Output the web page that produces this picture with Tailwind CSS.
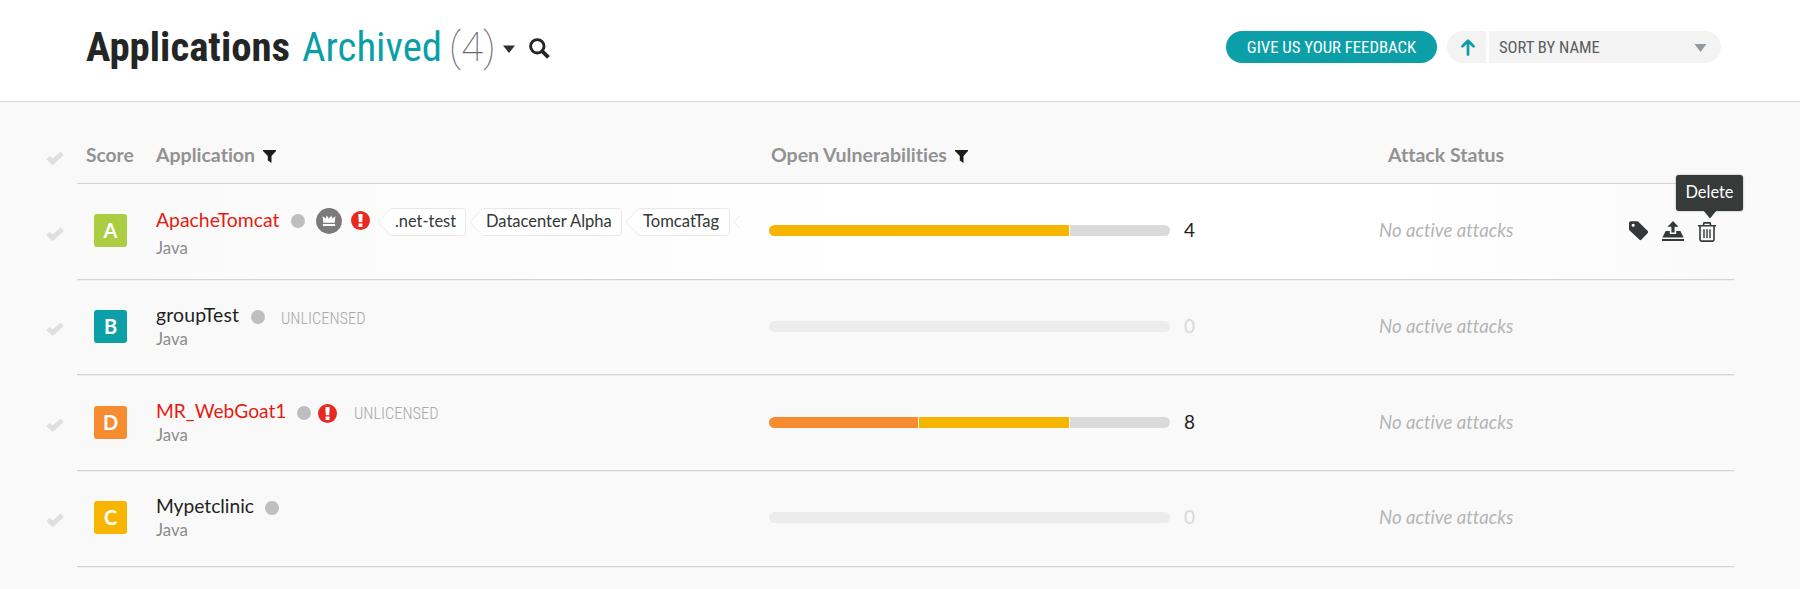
<!DOCTYPE html>
<html lang="en">
<head>
<meta charset="utf-8">
<title>Applications</title>
<script src="https://cdn.jsdelivr.net/npm/@tailwindcss/browser@4"></script>
</head>
<body class="w-[1800px] h-[589px] overflow-hidden bg-[#f9f9f9] font-[Lato,sans-serif] text-[#1d1f1f] [font-variant-ligatures:none]">
<svg class="hidden">
  <symbol id="check" viewBox="0 0 18 14"><path d="M1.900 6.600l4.700 4.300L16.200 2.300" fill="none" stroke="#dfdfdf" stroke-width="4.800"/></symbol>
  <symbol id="funnel" viewBox="0 0 13 13"><path d="M0 0h13v1L8.500 6v7L4.800 10.400V6L0 1z" fill="#1b1d1d"/></symbol>
  <symbol id="alert" viewBox="0 0 19 19"><circle cx="9.5" cy="9.5" r="9.5" fill="#e62a22"/><path d="M7.300 2.900h4.400l-.5 8.400H7.800zM7.600 12.600h3.800V16H7.600z" fill="#fff"/></symbol>
</svg>

<header class="h-[102px] bg-white border-b border-[#d6d6d6] flex items-start">
  <h1 class="flex ml-[86px] mt-[23px] h-12 leading-[48px] text-[40.8px] font-['Roboto_Condensed',Roboto,sans-serif] whitespace-nowrap">
    <span class="font-bold text-[#242626] w-[216px]">Applications</span>
    <span class="font-normal text-[#0a9fa8] w-[147px]">Archived</span>
    <span class="font-thin font-[Roboto,sans-serif] text-[40.6px] text-[#6a6a6a] w-[54px]">(4)</span>
  </h1>
  <svg class="mt-[45px] w-[12px] h-[8px]" viewBox="0 0 12 8"><path d="M0 .5h12L6 8z" fill="#2d302f"/></svg>
  <svg class="ml-[14px] mt-[38px] w-[21px] h-[21px]" viewBox="0 0 21 21" fill="none" stroke="#232626"><circle cx="8.3" cy="8.3" r="6.7" stroke-width="2.9"/><path d="M13.4 13.4l6 6" stroke-width="3.8"/></svg>
  <button class="ml-[676px] mt-[31px] w-[211px] h-8 rounded-full bg-[#0d9fa8] text-white text-[16.7px] leading-[31px] font-['Roboto_Condensed',sans-serif] text-center">GIVE US YOUR FEEDBACK</button>
  <div class="ml-[10px] mt-[31px] h-8 flex gap-[3px] font-['Roboto_Condensed',sans-serif] text-[16.600px] text-[#5a5c5c]">
    <div class="w-[39px] bg-[#f3f3f3] rounded-l-full"><svg class="ml-[14px] mt-[8px] w-[14px] h-[17px]" viewBox="0 0 14 17" fill="none" stroke="#0a9fa8" stroke-width="2.7" stroke-linecap="round" stroke-linejoin="round"><path d="M7 15.6V2M1.5 7.2L7 1.7l5.5 5.5"/></svg></div>
    <div class="w-[232px] bg-[#f3f3f3] rounded-r-full flex justify-between pl-[10px] pr-[14px] leading-[33px]"><span>SORT BY NAME</span><svg class="mt-[13px] w-[13px] h-[8px]" viewBox="0 0 13 8"><path d="M.5 0h12L6.5 8z" fill="#919a9e"/></svg></div>
  </div>
</header>

<main>
  <div class="h-[82px] relative flex items-start text-[19.5px] leading-6 font-bold text-[#929292] pt-[41px]">
    <svg class="ml-[46px] mt-[8px] w-[18px] h-[14px]"><use href="#check"/></svg>
    <div class="ml-[22px] w-[70px] text-[19.200px]">Score</div>
    <div class="w-[615px] flex gap-[8px]"><span>Application</span><svg class="mt-[7px] w-[13px] h-[13px]"><use href="#funnel"/></svg></div>
    <div class="w-[617px] flex gap-[8px]"><span>Open Vulnerabilities</span><svg class="mt-[7px] w-[13px] h-[13px]"><use href="#funnel"/></svg></div>
    <div>Attack Status</div>
    <div class="absolute left-[77px] right-[66px] bottom-0 h-px bg-[#d4d4d4] shadow-[0_1px_0_#ececec]"></div>
  </div>

  <section class="h-24 relative flex items-start bg-[linear-gradient(90deg,#f9f9f9_0%,#fff_50%,#fff_78%,#f9f9f9_98%)]">
    <svg class="ml-[46px] mt-[43px] w-[18px] h-[14px]"><use href="#check"/></svg>
    <div class="ml-[30px] mt-[30px] w-[33px] h-[33px] rounded-[3px] bg-[#aacd42] text-white font-bold text-[20px] leading-[33px] text-center">A</div>
    <div class="ml-[29px] w-[613px]">
      <div class="flex items-start h-[54px] pt-[24px]">
        <span class="text-[19.4px] leading-6 w-[135px] text-[#e51b12]">ApacheTomcat</span>
        <span class="w-[14px] h-[14px] mt-[6px] rounded-full bg-[#bebebe]"></span>
        <svg class="ml-[11px] w-[26px] h-[26px]" viewBox="0 0 26 26"><circle cx="13" cy="13" r="12.9" fill="#7b7b7b"/><path d="M7.3 14.8L6.6 8.3l3.1 2.3.9-3 2.4 2.8L15.4 7.600l.9 3 3.100-2.300-.7 6.500zM6.900 15.900h12.200v2H6.900z" fill="#fff"/></svg>
        <svg class="ml-[9px] mt-[3px] w-[19px] h-[19px]"><use href="#alert"/></svg>
        <div class="flex ml-[7px] gap-[3px] text-[16.4px] leading-[26px] text-[#333736]">
          <div class="relative w-[89px] h-7 pl-[18px]"><svg class="absolute inset-0 w-full h-full" viewBox="0 0 89 28"><path d="M14 .5h71q3.500 0 3.500 3.500v20q0 3.500-3.500 3.500H14L.7 14z" fill="#fff" stroke="#e8e8e8"/></svg><span class="relative">.net-test</span></div>
          <div class="relative w-[153px] h-7 pl-[17px]"><svg class="absolute inset-0 w-full h-full" viewBox="0 0 153 28"><path d="M14 .5h135q3.500 0 3.500 3.500v20q0 3.500-3.500 3.500H14L.7 14z" fill="#fff" stroke="#e8e8e8"/></svg><span class="relative whitespace-nowrap text-[16.500px]">Datacenter Alpha</span></div>
          <div class="relative w-[105px] h-7 pl-[18px]"><svg class="absolute inset-0 w-full h-full" viewBox="0 0 105 28"><path d="M14 .5h87q3.500 0 3.500 3.500v20q0 3.500-3.500 3.500H14L.7 14z" fill="#fff" stroke="#e8e8e8"/></svg><span class="relative text-[16.600px]">TomcatTag</span></div>
          <svg class="w-[7px] h-7" viewBox="0 0 7 28"><path d="M6.500 8L.7 14l5.800 6" fill="none" stroke="#e8e8e8"/></svg>
        </div>
      </div>
      <div class="text-[16.8px] leading-5 text-[#8c8c8c]">Java</div>
    </div>
    <div class="mt-[41px] w-[401px] h-[11px] flex gap-px rounded-full overflow-hidden"><div class="w-[300px] bg-[#f7b500]"></div><div class="flex-1 bg-[#dadada]"></div></div>
    <div class="ml-[14px] mt-[34px] w-[195px] text-[19px] leading-6">4</div>
    <div class="mt-[34px] w-[250px] text-[18.6px] leading-6 italic text-[#b5b5b5]">No active attacks</div>
    <svg class="mt-[37px] w-[20px] h-[20px]" viewBox="0 0 20 20"><path d="M0 2Q0 .3 1.800.300H8.200Q9 .3 9.600.900L18.800 10Q19.700 11 18.800 12L12.300 18.800Q11.400 19.500 10.500 18.800L.7 9.600Q0 9 0 8.200zM4.200 2.700a1.600 1.600 0 1 0 .01 0z" fill="#353838" fill-rule="evenodd"/></svg>
    <svg class="ml-[13px] mt-[37px] w-[22px] h-[20px]" viewBox="0 0 22 20" fill="#353838"><path d="M11 0l5.500 5.700H12.600V11.500H9.400V5.700H5.500zM3.600 10H7.800V13h6.400V10h4.200L21.600 16.500H.4zM0 18h22v2H0z"/></svg>
    <svg class="ml-[14px] mt-[38px] w-[18px] h-[20px]" viewBox="0 0 18 20" fill="none" stroke="#353838" stroke-width="1.600"><path d="M0 3.800h18M5.300 3.500L6 .9h6l.7 2.600M2 4v13.500Q2 19.100 3.600 19.100h10.800Q16 19.100 16 17.500V4"/><path d="M6 7.300v8.600M9 7.300v8.600M12 7.300v8.600" stroke-width="1.400"/></svg>
    <div class="absolute left-[77px] right-[66px] bottom-0 h-px bg-[#d4d4d4] shadow-[0_1px_0_#f0f0f0]"></div>
    <div class="absolute left-[1676px] -top-[9px] w-[67px] h-9 rounded-[3px] bg-[#363a39] shadow-[0_0_2px_#0006] text-white text-[16.4px] leading-[34px] text-center">Delete<svg class="absolute left-[27px] top-[35px] w-[14px] h-[9px]" viewBox="0 0 14 9"><path d="M0 0h14L7 8.500z" fill="#363a39"/></svg></div>
  </section>

  <section class="h-[95px] relative flex items-start">
    <svg class="ml-[46px] mt-[42px] w-[18px] h-[14px]"><use href="#check"/></svg>
    <div class="ml-[30px] mt-[30px] w-[33px] h-[33px] rounded-[3px] bg-[#0d9fa8] text-white font-bold text-[20px] leading-[33px] text-center">B</div>
    <div class="ml-[29px] w-[613px]">
      <div class="flex items-start h-[50px] pt-[24px]">
        <span class="text-[19.4px] leading-6 w-[95px] -mt-px tracking-[.15px]">groupTest</span>
        <span class="w-[14px] h-[14px] mt-[6px] rounded-full bg-[#bebebe]"></span>
        <span class="ml-[16px] mt-[3px] leading-6 text-[16.4px] font-light font-['Roboto_Condensed',sans-serif] text-[#a8a8a8]">UNLICENSED</span>
      </div>
      <div class="text-[16.8px] leading-5 -mt-px text-[#8c8c8c]">Java</div>
    </div>
    <div class="mt-[41px] w-[401px] h-[11px] rounded-full bg-[#ececec]"></div>
    <div class="ml-[14px] mt-[34px] w-[195px] text-[19px] leading-6 text-[#d8d8d8]">0</div>
    <div class="mt-[34px] text-[18.6px] leading-6 italic text-[#b5b5b5]">No active attacks</div>
    <div class="absolute left-[77px] right-[66px] bottom-0 h-px bg-[#d4d4d4] shadow-[0_1px_0_#ececec]"></div>
  </section>

  <section class="h-24 relative flex items-start">
    <svg class="ml-[46px] mt-[43px] w-[18px] h-[14px]"><use href="#check"/></svg>
    <div class="ml-[30px] mt-[31px] w-[33px] h-[33px] rounded-[3px] bg-[#f78b2f] text-white font-bold text-[20px] leading-[33px] text-center">D</div>
    <div class="ml-[29px] w-[613px]">
      <div class="flex items-start h-[50px] pt-[25px]">
        <span class="text-[19.2px] leading-6 w-[141px] -mt-px text-[#e51b12]">MR_WebGoat1</span>
        <span class="w-[14px] h-[14px] mt-[6px] rounded-full bg-[#bebebe]"></span>
        <svg class="ml-[7px] mt-[4px] w-[19px] h-[19px]"><use href="#alert"/></svg>
        <span class="ml-[17px] mt-[2px] leading-6 text-[16.4px] font-light font-['Roboto_Condensed',sans-serif] text-[#a8a8a8]">UNLICENSED</span>
      </div>
      <div class="text-[16.8px] leading-5 text-[#8c8c8c]">Java</div>
    </div>
    <div class="mt-[42px] w-[401px] h-[11px] flex gap-px rounded-full overflow-hidden"><div class="w-[149px] bg-[#f78b2f]"></div><div class="w-[150px] bg-[#f7b500]"></div><div class="flex-1 bg-[#dadada]"></div></div>
    <div class="ml-[14px] mt-[35px] w-[195px] text-[19px] leading-6">8</div>
    <div class="mt-[35px] text-[18.6px] leading-6 italic text-[#b5b5b5]">No active attacks</div>
    <div class="absolute left-[77px] right-[66px] bottom-0 h-px bg-[#d4d4d4] shadow-[0_1px_0_#f0f0f0]"></div>
  </section>

  <section class="h-24 relative flex items-start">
    <svg class="ml-[46px] mt-[42px] w-[18px] h-[14px]"><use href="#check"/></svg>
    <div class="ml-[30px] mt-[30px] w-[33px] h-[33px] rounded-[3px] bg-[#f7b500] text-white font-bold text-[20px] leading-[33px] text-center">C</div>
    <div class="ml-[29px] w-[613px]">
      <div class="flex items-start h-[49px] pt-[24px]">
        <span class="text-[19.2px] leading-6 w-[109px] -mt-px">Mypetclinic</span>
        <span class="w-[14px] h-[14px] mt-[6px] rounded-full bg-[#bebebe]"></span>
      </div>
      <div class="text-[16.8px] leading-5 text-[#8c8c8c]">Java</div>
    </div>
    <div class="mt-[41px] w-[401px] h-[11px] rounded-full bg-[#ececec]"></div>
    <div class="ml-[14px] mt-[34px] w-[195px] text-[19px] leading-6 text-[#d8d8d8]">0</div>
    <div class="mt-[34px] text-[18.6px] leading-6 italic text-[#b5b5b5]">No active attacks</div>
    <div class="absolute left-[77px] right-[66px] bottom-0 h-px bg-[#d4d4d4] shadow-[0_1px_0_#f0f0f0]"></div>
  </section>
</main>
</body>
</html>
